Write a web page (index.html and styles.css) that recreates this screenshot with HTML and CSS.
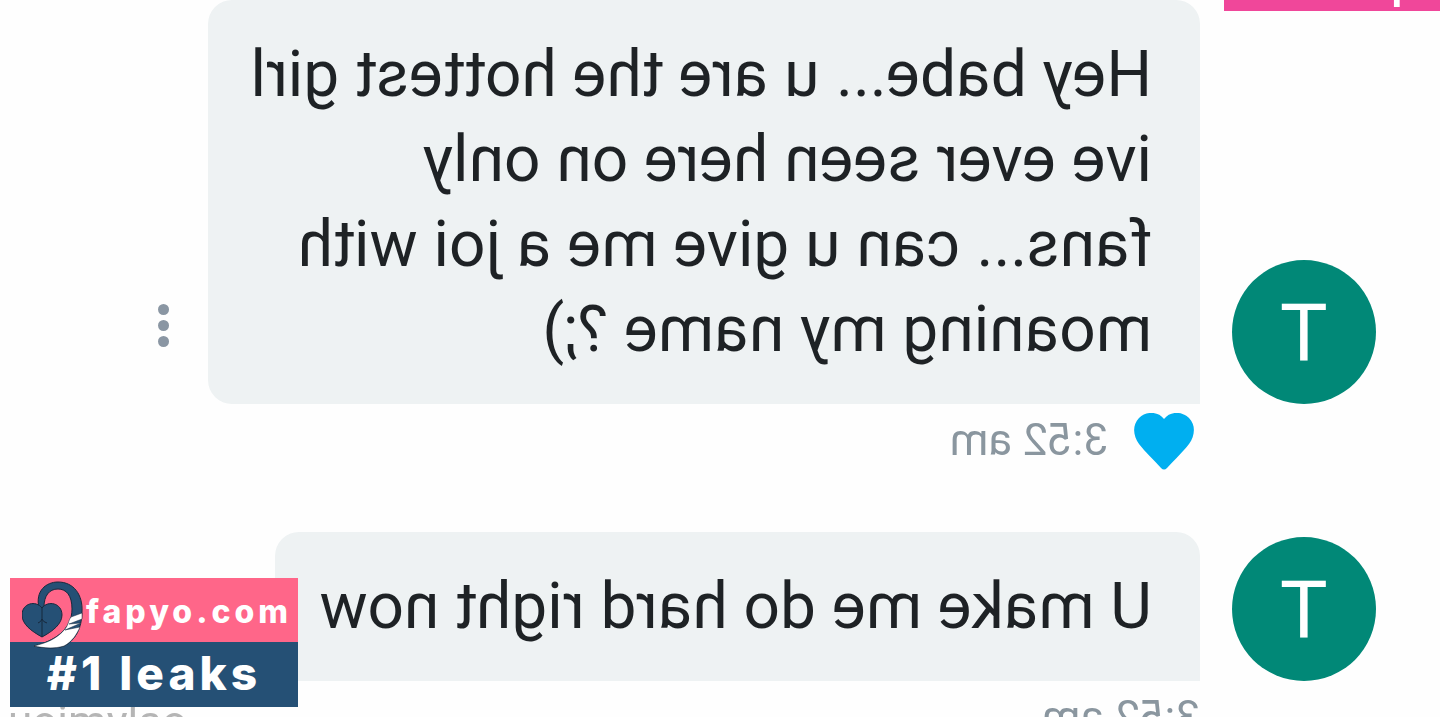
FILE: index.html
```
<!DOCTYPE html>
<html lang="en">

<head>
    <meta charset="UTF-8">
    <meta name="viewport" content="width=device-width, initial-scale=1.0">
    <title>Messages</title>

    <link rel="stylesheet" href="styles.css">
</head>

<body>

    <!-- the whole chat is mirrored -->
    <main class="chat">

        <div class="banner"><span>q</span></div>

        <section class="message">
            <div class="avatar">T</div>
            <p class="bubble">Hey babe... u are the hottest girl<br>ive ever seen here on only<br>fans... can u give me a joi with<br>moaning my name ?;)</p>
            <button class="menu" aria-label="Message options">
                <span></span>
                <span></span>
                <span></span>
            </button>
        </section>

        <div class="meta">
            <svg class="heart" viewBox="0 0 60 57" aria-hidden="true">
                <path d="M30 6 C24 -2 12 -2 5 5 C-2 12 -1 23 5 31 C11 39 20 47 27 55 Q30 58 33 55 C40 47 49 39 55 31 C61 23 62 12 55 5 C48 -2 36 -2 30 6 Z" fill="#00aff0" />
            </svg>
            <time>3:52 am</time>
        </div>

        <section class="message">
            <div class="avatar">T</div>
            <p class="bubble">U make me do hard right now</p>
        </section>

        <div class="meta">
            <time>3:52 am</time>
        </div>

    </main>

    <p class="handle">uoimylao</p>

    <a class="badge" href="#">
        <span class="site">fapyo.com</span>
        <span class="slogan">#1 leaks</span>
        <svg class="logo" viewBox="0 0 62 68" aria-hidden="true">
            <path d="M17 27 C13 10 24 1 36 1 C52 1 61 14 60 31 C60 47 53 60 42 65 C33 68 21 67 12 65 C32 60 50 49 50 28 C50 14 44 8 36 8 C27 8 22 15 22 26 Z" fill="#255075" stroke="#17283c" stroke-width="1" />
            <path d="M60 32 L49 36 C46 40 47 43 43 48 C35 58 24 62 12 65 C21 67 33 68 42 65 C50 61 55 53 58 46 L43 49 L59 42 L47 43 L60 38 Z" fill="#fff" stroke="#17283c" stroke-width="0.5" />
            <path d="M20 27 C14 19 0 22 0 34 C0 43 9 50 20 56 C31 50 40 43 40 34 C40 22 26 19 20 27 Z" fill="#255075" stroke="#17283c" stroke-width="1" />
            <path d="M20 27 V56 M16 42 Q19 41 20 38 Q21 41 25 42" fill="none" stroke="#17283c" stroke-width="1" />
        </svg>
    </a>

</body>

</html>
```

FILE: styles.css
```
* {
    margin: 0;
    padding: 0;
    box-sizing: border-box;
}

body {
    position: relative;
    height: 100vh;
    overflow: hidden;
    background-color: #fefefe;
    color: #1e2225;
    font-family: Roboto, sans-serif;
}

.chat {
    position: relative;
    transform: scaleX(-1);
}

.banner {
    position: absolute;
    top: 0;
    left: 0;
    width: 216px;
    height: 11px;
    padding-left: 22px;
    display: flex;
    align-items: flex-end;
    overflow: hidden;
    background-color: #f0479a;
    color: white;
    font-size: 48px;
    font-weight: 500;
    line-height: 60px;
}

.message {
    display: flex;
    align-items: flex-end;
    padding-left: 64px;
}

.avatar {
    flex: none;
    width: 144px;
    height: 144px;
    margin-right: 32px;
    padding-top: 2px;
    border-radius: 50%;
    background-color: #018877;
    color: white;
    font-size: 80px;
    line-height: 144px;
    text-align: center;
}

.bubble {
    max-width: 992px;
    padding: 32px 44px 32px 48px;
    border-radius: 24px 24px 24px 0;
    background-color: #eef2f3;
    font-size: 64px;
    line-height: 85px;
    white-space: nowrap;
}

.menu {
    display: flex;
    flex-direction: column;
    gap: 5px;
    margin: 0 0 57px 39px;
    border: none;
    background: none;
    cursor: pointer;
}

.menu span {
    width: 11px;
    height: 11px;
    border-radius: 50%;
    background-color: #8a96a3;
}

.meta {
    display: flex;
    gap: 26px;
    height: 128px;
    padding: 8px 0 0 240px;
    color: #8a969f;
    font-size: 44px;
    line-height: 56px;
}

.heart {
    width: 60px;
    height: 57px;
    margin: 1px 0 0 6px;
}

.handle {
    position: absolute;
    left: 8px;
    top: 700px;
    color: #b5b5b5;
    font-size: 44px;
    line-height: 44px;
}

.badge {
    position: absolute;
    left: 10px;
    bottom: 10px;
    width: 288px;
    color: white;
    font-family: Inter, sans-serif;
    font-weight: 800;
    letter-spacing: 4px;
    text-decoration: none;
}

.badge span {
    display: block;
}

.site {
    height: 64px;
    padding-left: 76px;
    background-color: #ff6689;
    font-size: 32px;
    line-height: 68px;
}

.slogan {
    height: 65px;
    background-color: #255075;
    font-size: 46px;
    line-height: 62px;
    text-align: center;
}

.logo {
    position: absolute;
    left: 12px;
    top: 3px;
    width: 62px;
    height: 68px;
}
```
